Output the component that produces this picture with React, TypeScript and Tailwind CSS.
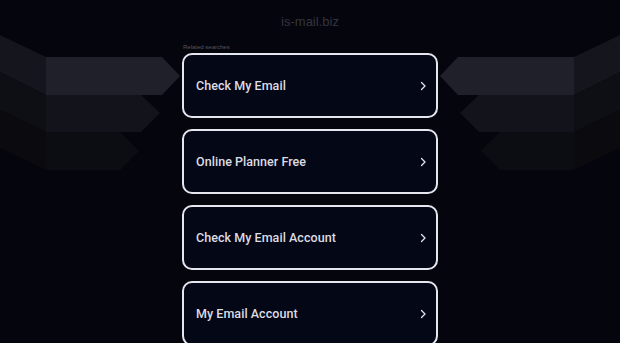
import React from 'react';

const searches = ['Check My Email', 'Online Planner Free', 'Check My Email Account', 'My Email Account'];

const Backdrop: React.FC = () => (
  <svg className="absolute inset-0" width="620" height="343" viewBox="0 0 620 343">
    {/* left side faces */}
    <polygon points="0,35 46,57 46,95 0,72" fill="#15161d" />
    <polygon points="0,72 46,95 46,132 0,110" fill="#0e0f15" />
    <polygon points="0,110 46,132 46,170 0,148" fill="#0a0a0f" />
    {/* left arrows */}
    <polygon points="46,57 162,57 180,76 162,95 46,95" fill="#1f2029" />
    <polygon points="46,95 141,95 160,113 141,132 46,132" fill="#13141b" />
    <polygon points="46,132 120,132 139,151 120,170 46,170" fill="#0c0d13" />
    {/* right side faces */}
    <polygon points="620,35 574,57 574,95 620,72" fill="#15161d" />
    <polygon points="620,72 574,95 574,132 620,110" fill="#0e0f15" />
    <polygon points="620,110 574,132 574,170 620,148" fill="#0a0a0f" />
    {/* right arrows */}
    <polygon points="574,57 458,57 440,76 458,95 574,95" fill="#1f2029" />
    <polygon points="574,95 479,95 460,113 479,132 574,132" fill="#13141b" />
    <polygon points="574,132 500,132 481,151 500,170 574,170" fill="#0c0d13" />
  </svg>
);

const Chevron: React.FC = () => (
  <svg width="8" height="10" viewBox="0 0 8 10" fill="none">
    <path d="M2.5 1.5l3.5 3.5-3.5 3.5" stroke="#e4e4ec" strokeWidth="1.3" strokeLinecap="round" strokeLinejoin="round" />
  </svg>
);

export default function App() {
  return (
    <div className="relative w-full h-[343px] overflow-hidden bg-[#05050d]" style={{ fontFamily: '"Liberation Sans", Arial, sans-serif' }}>
      <Backdrop />
      <div className="relative flex flex-col items-center pt-[14px]">
        <h1 className="text-[13px] leading-[16px] text-[#34343e]">is-mail.biz</h1>
        <div className="w-[256px] mt-[13px]">
          <p className="text-[6px] leading-[8px] text-[#55565e] pl-[1px]">Related searches</p>
          <div className="flex flex-col gap-[11px] mt-[2px]">
            {searches.map((s) => (
              <div
                key={s}
                className="h-[65px] rounded-[10px] border-2 border-[#e6e6ee] bg-[#040716] flex items-center justify-between pl-[12px] pr-[9px] pt-[1px]"
              >
                <span className="font-['Roboto',sans-serif] text-[12.5px] font-medium text-[#dcdce4] tracking-[0.05px]">{s}</span>
                <Chevron />
              </div>
            ))}
          </div>
        </div>
      </div>
    </div>
  );
}
